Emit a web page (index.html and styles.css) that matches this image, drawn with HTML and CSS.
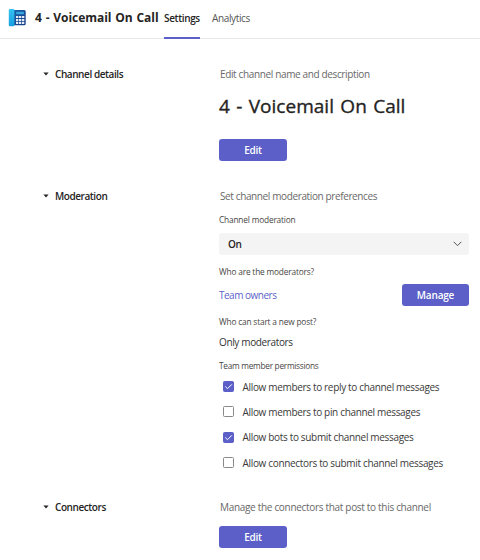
FILE: index.html
```html
<!DOCTYPE html>
<html lang="en">
<head>
<meta charset="utf-8">
<title>4 - Voicemail On Call</title>
<link rel="stylesheet" href="styles.css">
</head>
<body>
<header class="topbar">
  <svg class="logo" width="19" height="19" viewBox="0 0 19 19">
    <defs>
      <linearGradient id="body" x1="0" y1="0" x2="1" y2="1"><stop offset="0" stop-color="#1764ad"/><stop offset="1" stop-color="#193b83"/></linearGradient>
      <linearGradient id="handset" x1="0" y1="0" x2="0" y2="1"><stop offset="0" stop-color="#35c3f3"/><stop offset="1" stop-color="#169ee0"/></linearGradient>
    </defs>
    <rect x="4" y="2" width="13.700" height="15.300" rx="1.500" fill="url(#body)"/>
    <path d="M.8 2Q.8 1 2 1H5.200Q6.400 1 6.400 2V17Q6.400 18.300 5.200 18.300H2Q.8 18.300 .8 17Z" fill="url(#handset)"/>
    <rect x="8.200" y="3.800" width="7.800" height="2.400" rx=".4" fill="#35a9df"/>
    <path d="M8 8h2.300v2.100H8zM11 8h2.300v2.100h-2.300zM14 8h2.300v2.100h-2.300zM8 10.900h2.300V13H8zM11 10.900h2.300V13h-2.300zM14 10.900h2.300V13h-2.300zM8 13.800h2.300v2.100H8zM11 13.800h2.300v2.100h-2.300zM14 13.800h2.300v2.100h-2.300z" fill="#e7edf5"/>
  </svg>
  <div class="name">4 - Voicemail On Call</div>
  <nav class="tabs">
    <a class="tab active">Settings</a>
    <a class="tab analytics">Analytics</a>
  </nav>
</header>
<main>
  <section class="section details">
    <h2 class="heading"><svg class="caret" width="6" height="4" viewBox="0 0 6 4"><path d="M.4.5H5.600L3 3.500Z"/></svg><span>Channel details</span></h2>
    <div class="content">
      <p class="intro">Edit channel name and description</p>
      <h1>4 - Voicemail On Call</h1>
      <button class="btn">Edit</button>
    </div>
  </section>
  <section class="section moderation">
    <h2 class="heading"><svg class="caret" width="6" height="4" viewBox="0 0 6 4"><path d="M.4.5H5.600L3 3.500Z"/></svg><span>Moderation</span></h2>
    <div class="content">
      <p class="intro i-moderation">Set channel moderation preferences</p>
      <p class="label l-channel">Channel moderation</p>
      <div class="select"><span>On</span><svg width="9" height="6" viewBox="0 0 9 6"><path d="M.7.8L4.500 4.700L8.300.8"/></svg></div>
      <p class="label l-who">Who are the moderators?</p>
      <div class="owners"><a>Team owners</a><button class="btn manage">Manage</button></div>
      <p class="label l-post">Who can start a new post?</p>
      <p class="value">Only moderators</p>
      <p class="label l-perms">Team member permissions</p>
      <div class="checks">
        <div class="check on"><span class="box"><svg width="9" height="9" viewBox="0 0 9 9"><path d="M1.300 4.500L3.500 6.700L7.900 2.300"/></svg></span><span>Allow members to reply to channel messages</span></div>
        <div class="check"><span class="box"></span><span>Allow members to pin channel messages</span></div>
        <div class="check on"><span class="box"><svg width="9" height="9" viewBox="0 0 9 9"><path d="M1.300 4.500L3.500 6.700L7.900 2.300"/></svg></span><span>Allow bots to submit channel messages</span></div>
        <div class="check"><span class="box"></span><span>Allow connectors to submit channel messages</span></div>
      </div>
    </div>
  </section>
  <section class="section connectors">
    <h2 class="heading"><svg class="caret" width="6" height="4" viewBox="0 0 6 4"><path d="M.4.5H5.600L3 3.500Z"/></svg><span>Connectors</span></h2>
    <div class="content">
      <p class="intro i-connectors">Manage the connectors that post to this channel</p>
      <button class="btn">Edit</button>
    </div>
  </section>
</main>
</body>
</html>
```
FILE: styles.css
```css
* { box-sizing: border-box; }
body { margin: 0; width: 480px; height: 560px; overflow: hidden; background: #fff; color: #252423; font: 10px/16px "Open Sans", "Noto Sans", sans-serif; letter-spacing: -.36px; white-space: nowrap; }
h1, h2, p { margin: 0; }
.topbar { display: flex; height: 39px; padding-left: 8px; border-bottom: 1px solid #e8e8e8; }
.logo { margin-top: 8px; flex: none; }
.name { width: 129px; margin-left: 8px; font-size: 12px; font-weight: 700; line-height: 36px; letter-spacing: -.05px; word-spacing: .8px; flex: none; }
.tabs { display: flex; gap: 12px; line-height: 36px; }
.tab { height: 39px; color: #555; }
.active { width: 36px; border-bottom: 2px solid #5b5fc7; color: #252423; font-weight: 600; }
main { padding-left: 43px; }
.section { display: grid; grid-template-columns: 176px 250px; }
.details { padding-top: 27px; height: 149px; }
.moderation { height: 311px; }
.heading { display: flex; align-items: center; height: 16px; gap: 6px; font-size: 10px; font-weight: 600; letter-spacing: -.43px; }
.caret { fill: #252423; flex: none; }
.intro { height: 16px; padding-left: 1px; color: #686868; }
.i-moderation { letter-spacing: -.38px; }
.i-connectors { letter-spacing: -.31px; }
h1 { height: 32px; margin-top: 8px; font-size: 19px; line-height: 32px; font-weight: 400; letter-spacing: .02px; word-spacing: 1.400px; -webkit-text-stroke: .35px #252423; }
.btn { display: block; width: 68px; height: 22px; padding: 0; border: 0; border-radius: 3px; background: #5b5fc7; color: #fff; font: 600 10px/22px "Open Sans", "Noto Sans", sans-serif; letter-spacing: -.2px; }
.details .btn { margin-top: 17px; }
.connectors .btn { margin-top: 11px; }
.label { height: 12px; font-size: 8.300px; line-height: 12px; letter-spacing: -.17px; color: #484644; }
.l-channel { margin-top: 10px; }
.select { display: flex; align-items: center; justify-content: space-between; height: 22px; margin-top: 7px; padding: 0 7px 0 9px; border-radius: 3px; background: #f4f4f4; font-weight: 600; }
.select path { fill: none; stroke: #555; stroke-width: 1; }
.l-who { margin-top: 11px; }
.owners { display: flex; align-items: center; justify-content: space-between; height: 22px; margin-top: 6px; color: #5b5fc7; letter-spacing: -.5px; }
.manage { width: 67px; }
.l-post { margin-top: 10px; }
.value { height: 16px; margin-top: 6px; color: #333; }
.l-perms { margin-top: 10px; letter-spacing: -.28px; }
.checks { margin-top: 2px; padding-left: 4px; }
.check { display: flex; align-items: center; height: 25.300px; color: #3b3a39; letter-spacing: -.33px; }
.box { display: flex; align-items: center; justify-content: center; width: 11px; height: 11px; margin-right: 8.500px; border: 1px solid #8a8886; border-radius: 1.500px; }
.on .box { border-color: #5b5fc7; background: #5b5fc7; }
.box path { fill: none; stroke: #fff; stroke-width: 1; }
```
